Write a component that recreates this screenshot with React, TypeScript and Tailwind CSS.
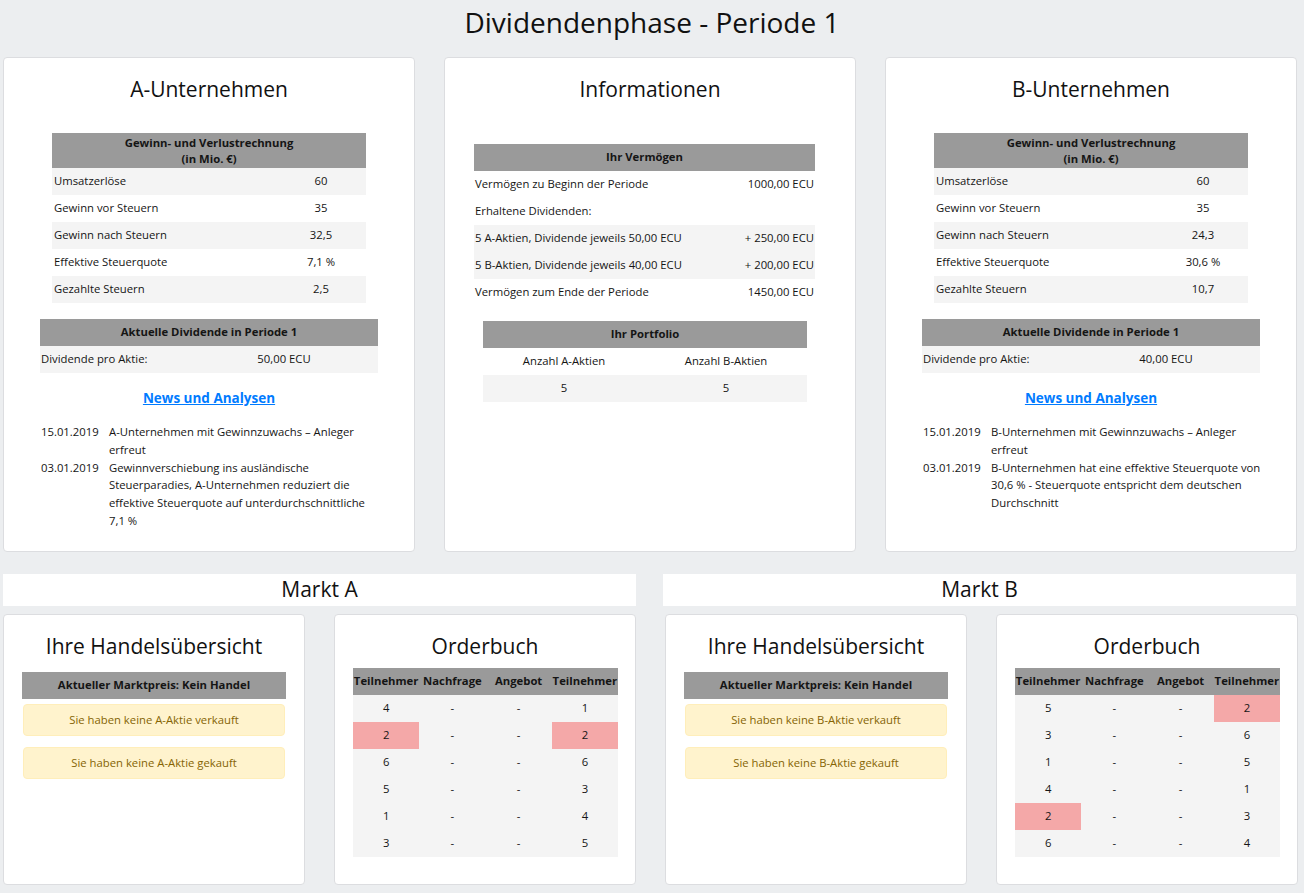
import React from 'react';

const FONT = "font-['Open_Sans','Noto_Sans',sans-serif]";

type Row = [string, string];

function Card({ className, children }: { className?: string; children: React.ReactNode }) {
  return (
    <div className={`bg-white border border-[#dcdde0] rounded-[4px] ${className ?? ''}`}>{children}</div>
  );
}

function CardTitle({ children }: { children: React.ReactNode }) {
  return <h3 className="pt-[15px] text-center text-[21px] leading-[32px] text-[#111]">{children}</h3>;
}

function GrayHead({ children, className }: { children: React.ReactNode; className?: string }) {
  return (
    <div className={`bg-[#9a9a9a] font-bold text-center flex flex-col justify-center ${className ?? 'h-[27px]'}`}>
      {children}
    </div>
  );
}

function Company({ name, guv, dividend, news }: { name: string; guv: Row[]; dividend: string; news: Row[] }) {
  return (
    <Card className="w-[412px] h-[495px]">
      <CardTitle>{name}</CardTitle>
      <div className="px-[36px]">
        <div className="mx-[12px] mt-[28px]">
          <GrayHead className="h-[35px] leading-[16px]">
            <span>Gewinn- und Verlustrechnung</span>
            <span>(in Mio. €)</span>
          </GrayHead>
          {guv.map(([l, v], i) => (
            <div key={l} className={`flex h-[27px] items-center ${i % 2 === 0 ? 'bg-[#f4f4f4]' : ''}`}>
              <span className="flex-1 pl-[2px]">{l}</span>
              <span className="w-[90px] text-center">{v}</span>
            </div>
          ))}
        </div>
        <div className="mt-[16px]">
          <GrayHead>Aktuelle Dividende in Periode 1</GrayHead>
          <div className="flex h-[27px] items-center bg-[#f4f4f4]">
            <span className="flex-1 pl-[1px]">Dividende pro Aktie:</span>
            <span className="w-[188px] text-center">{dividend}</span>
          </div>
        </div>
        <div className="mt-[15px] text-center">
          <a className="text-[13.5px] font-bold text-[#007bff] underline leading-[20px]" href="#">
            News und Analysen
          </a>
        </div>
        <div className="mt-[15px] pl-[1px] mr-[-6px] leading-[17.8px]">
          {news.map(([d, t]) => (
            <div key={d} className="grid grid-cols-[68px_1fr]">
              <span>{d}</span>
              <span>{t}</span>
            </div>
          ))}
        </div>
      </div>
    </Card>
  );
}

function Info() {
  const rows: [string, string, boolean][] = [
    ['Vermögen zu Beginn der Periode', '1000,00 ECU', false],
    ['Erhaltene Dividenden:', '', false],
    ['5 A-Aktien, Dividende jeweils 50,00 ECU', '+ 250,00 ECU', true],
    ['5 B-Aktien, Dividende jeweils 40,00 ECU', '+ 200,00 ECU', true],
    ['Vermögen zum Ende der Periode', '1450,00 ECU', false],
  ];
  return (
    <Card className="w-[412px] h-[495px]">
      <CardTitle>Informationen</CardTitle>
      <div className="ml-[29px] w-[341px] mt-[39px]">
        <GrayHead>Ihr Vermögen</GrayHead>
        {rows.map(([l, v, g]) => (
          <div key={l} className={`flex h-[27px] items-center justify-between px-[1px] ${g ? 'bg-[#f4f4f4]' : ''}`}>
            <span>{l}</span>
            <span>{v}</span>
          </div>
        ))}
      </div>
      <div className="ml-[38px] w-[324px] mt-[15px]">
        <GrayHead>Ihr Portfolio</GrayHead>
        <div className="grid grid-cols-2 h-[27px] items-center text-center">
          <span>Anzahl A-Aktien</span>
          <span>Anzahl B-Aktien</span>
        </div>
        <div className="grid grid-cols-2 h-[27px] items-center text-center bg-[#f4f4f4]">
          <span>5</span>
          <span>5</span>
        </div>
      </div>
    </Card>
  );
}

function Handel({ letter }: { letter: string }) {
  return (
    <Card className="w-[302px] h-[271px]">
      <CardTitle>Ihre Handelsübersicht</CardTitle>
      <div className="px-[18px] mt-[10px]">
        <GrayHead>Aktueller Marktpreis: Kein Handel</GrayHead>
        <div className="mt-[5px] mx-[1px] h-[32px] flex items-center justify-center rounded-[4px] bg-[#fff3cd] border border-[#ffeeba] text-[#856404]">
          Sie haben keine {letter}-Aktie verkauft
        </div>
        <div className="mt-[11px] mx-[1px] h-[32px] flex items-center justify-center rounded-[4px] bg-[#fff3cd] border border-[#ffeeba] text-[#856404]">
          Sie haben keine {letter}-Aktie gekauft
        </div>
      </div>
    </Card>
  );
}

type Order = { a: number; b: number; ha?: boolean; hb?: boolean };

function Orderbuch({ rows }: { rows: Order[] }) {
  return (
    <Card className="w-[302px] h-[271px]">
      <CardTitle>Orderbuch</CardTitle>
      <div className="ml-[18px] w-[265px] mt-[6px]">
        <div className="grid grid-cols-4 h-[27px] items-center bg-[#9a9a9a] font-bold text-center">
          <span>Teilnehmer</span>
          <span>Nachfrage</span>
          <span>Angebot</span>
          <span>Teilnehmer</span>
        </div>
        {rows.map((r, i) => (
          <div key={i} className="grid grid-cols-4 h-[27px] text-center bg-[#f4f4f4]">
            <span className={`flex items-center justify-center ${r.ha ? 'bg-[#f4a8a8]' : ''}`}>{r.a}</span>
            <span className="flex items-center justify-center">-</span>
            <span className="flex items-center justify-center">-</span>
            <span className={`flex items-center justify-center ${r.hb ? 'bg-[#f4a8a8]' : ''}`}>{r.b}</span>
          </div>
        ))}
      </div>
    </Card>
  );
}

function Banner({ children }: { children: React.ReactNode }) {
  return (
    <div className="w-[633px] h-[32px] bg-white flex items-center justify-center text-[21px] text-[#111]">
      {children}
    </div>
  );
}

export default function App() {
  const guvA: Row[] = [
    ['Umsatzerlöse', '60'],
    ['Gewinn vor Steuern', '35'],
    ['Gewinn nach Steuern', '32,5'],
    ['Effektive Steuerquote', '7,1 %'],
    ['Gezahlte Steuern', '2,5'],
  ];
  const guvB: Row[] = [
    ['Umsatzerlöse', '60'],
    ['Gewinn vor Steuern', '35'],
    ['Gewinn nach Steuern', '24,3'],
    ['Effektive Steuerquote', '30,6 %'],
    ['Gezahlte Steuern', '10,7'],
  ];
  const newsA: Row[] = [
    ['15.01.2019', 'A-Unternehmen mit Gewinnzuwachs – Anleger erfreut'],
    ['03.01.2019', 'Gewinnverschiebung ins ausländische Steuerparadies, A-Unternehmen reduziert die effektive Steuerquote auf unterdurchschnittliche 7,1\u00a0%'],
  ];
  const newsB: Row[] = [
    ['15.01.2019', 'B-Unternehmen mit Gewinnzuwachs – Anleger erfreut'],
    ['03.01.2019', 'B-Unternehmen hat eine effektive Steuerquote von 30,6\u00a0% - Steuerquote entspricht dem deutschen Durchschnitt'],
  ];
  const ordersA: Order[] = [
    { a: 4, b: 1 },
    { a: 2, b: 2, ha: true, hb: true },
    { a: 6, b: 6 },
    { a: 5, b: 3 },
    { a: 1, b: 4 },
    { a: 3, b: 5 },
  ];
  const ordersB: Order[] = [
    { a: 5, b: 2, hb: true },
    { a: 3, b: 6 },
    { a: 1, b: 5 },
    { a: 4, b: 1 },
    { a: 2, b: 3, ha: true },
    { a: 6, b: 4 },
  ];

  return (
    <div className={`min-h-screen bg-[#eceef0] ${FONT} text-[11.3px] text-[#151515] pb-[8px]`}>
      <h1 className="text-center text-[28px] leading-[44px] text-[#111]">Dividendenphase - Periode 1</h1>

      <div className="flex gap-[29px] pl-[3px] mt-[13px]">
        <Company name="A-Unternehmen" guv={guvA} dividend="50,00 ECU" news={newsA} />
        <Info />
        <Company name="B-Unternehmen" guv={guvB} dividend="40,00 ECU" news={newsB} />
      </div>

      <div className="flex gap-[27px] pl-[3px] mt-[22px]">
        <Banner>Markt A</Banner>
        <Banner>Markt B</Banner>
      </div>

      <div className="flex gap-[29px] pl-[3px] mt-[8px]">
        <Handel letter="A" />
        <Orderbuch rows={ordersA} />
        <Handel letter="B" />
        <Orderbuch rows={ordersB} />
      </div>
    </div>
  );
}
